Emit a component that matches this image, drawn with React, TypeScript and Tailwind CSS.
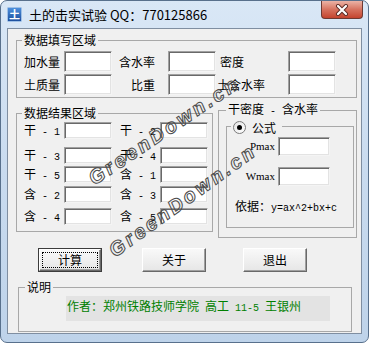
const cjk = "font-['Noto_Sans_CJK_SC',sans-serif]";
const mono = "font-['Liberation_Mono',monospace] text-[10px]";
const edit =
  "bg-white border border-t-[#a0a0a0] border-l-[#a0a0a0] border-r-[#f4f4f4] border-b-[#f4f4f4] shadow-[inset_1px_1px_0_#696969,inset_-1px_-1px_0_#e3e3e3]";

function Group({
  title,
  className,
  legendClass,
  children,
}: {
  title: React.ReactNode;
  className: string;
  legendClass: string;
  children?: React.ReactNode;
}) {
  return (
    <fieldset className={`border border-[#a8a8a8] ${className}`}>
      <legend className={`px-[2px] leading-[16px] ${legendClass}`}>{title}</legend>
      {children}
    </fieldset>
  );
}

function Label2({ ch, n }: { ch: string; n: string }) {
  return (
    <span className="whitespace-pre leading-[16px]">
      {ch}
      <span className={mono}>{` - ${n}`}</span>
    </span>
  );
}

function Btn({ label, isDefault, className }: { label: string; isDefault?: boolean; className: string }) {
  return (
    <div className={`h-[24px] w-[64px] ${isDefault ? "border border-[#3c3c3c]" : ""} ${className}`}>
      <div className="flex h-full w-full items-center justify-center border border-t-white border-l-white border-r-[#696969] border-b-[#696969] bg-gradient-to-b from-[#f9f9f9] to-[#e6e6e6] shadow-[inset_-1px_-1px_0_#a0a0a0]">
        {isDefault ? (
          <div className="flex h-[16px] w-[56px] items-center justify-center border border-dotted border-black leading-[14px]">
            {label}
          </div>
        ) : (
          <span className="leading-[16px]">{label}</span>
        )}
      </div>
    </div>
  );
}

const resultRows = [
  { mt: "mt-[1px]", a: ["干", "1"], b: ["干", "2"] },
  { mt: "mt-[8px]", a: ["干", "3"], b: ["干", "4"] },
  { mt: "mt-[2px]", a: ["干", "5"], b: ["含", "1"] },
  { mt: "mt-[3px]", a: ["含", "2"], b: ["含", "3"] },
  { mt: "mt-[5px]", a: ["含", "4"], b: ["含", "5"] },
];

export default function App() {
  return (
    <div className={`relative h-[343px] w-[369px] overflow-hidden bg-white text-[12px] text-black ${cjk}`}>
      <div className="h-full w-full rounded-[7px] border border-[#58708c] bg-gradient-to-b from-[#d9e7f6] via-[#c9dbef] to-[#bed3ea]">
        {/* title bar */}
        <div className="flex h-[27px] items-start">
          <div className="ml-[6px] mt-[6px] flex h-[15px] w-[15px] items-start justify-center rounded-[1px] border border-[#9fc0e6] bg-gradient-to-b from-[#4d8fdc] to-[#1d4f9e] text-[11px] font-bold leading-[12px] text-white">
            土
          </div>
          <div className="ml-[7px] mt-[5px] text-[13px] leading-[17px] text-black">土的击实试验 QQ：770125866</div>
          <div className="ml-auto mr-[5px] flex h-[18px] w-[42px] items-center justify-center rounded-b-[4px] border border-t-0 border-[#6e3a33] bg-gradient-to-b from-[#eab3a6] via-[#d6725f] to-[#c4432e]">
            <svg width="14" height="12" viewBox="0 0 14 12">
              <path d="M3 2 L11 10 M11 2 L3 10" stroke="#5a2a24" strokeWidth="4" strokeLinecap="round" />
              <path d="M3 2 L11 10 M11 2 L3 10" stroke="#ffffff" strokeWidth="2.2" strokeLinecap="round" />
            </svg>
          </div>
        </div>

        {/* client area */}
        <div className="mx-[6px] h-[306px] border border-[#7f8ea1] bg-[#f0f0f0]">
          {/* data entry */}
          <Group title="数据填写区域" className="ml-[8px] mt-[3px] h-[66px] w-[341px]" legendClass="ml-[5px]">
            <div className="grid grid-cols-[40px_48px_56px_48px_72px_48px] grid-rows-[21px_21px] items-center gap-y-[2px] pl-[7px] pt-[3px]">
              <span className="leading-[16px]">加水量</span>
              <div className={`h-[21px] ${edit}`} />
              <span className="pr-[13px] text-right leading-[16px]">含水率</span>
              <div className={`h-[21px] ${edit}`} />
              <span className="pl-[4px] leading-[16px]">密度</span>
              <div className={`h-[21px] ${edit}`} />
              <span className="leading-[16px]">土质量</span>
              <div className={`h-[21px] ${edit}`} />
              <span className="pr-[13px] text-right leading-[16px]">比重</span>
              <div className={`h-[21px] ${edit}`} />
              <span className="pl-[1px] leading-[16px]">土含水率</span>
              <div className={`h-[21px] ${edit}`} />
            </div>
          </Group>

          <div className="ml-[8px] flex items-start">
            {/* results */}
            <Group title="数据结果区域" className="mt-[7px] h-[127px] w-[197px]" legendClass="ml-[5px]">
              <div className="flex flex-col">
                {resultRows.map((r, i) => (
                  <div key={i} className={`flex h-[17px] items-center ${r.mt}`}>
                    <div className="w-[47px] pr-[4px] text-right">
                      <Label2 ch={r.a[0]} n={r.a[1]} />
                    </div>
                    <div className={`h-[17px] w-[48px] ${edit}`} />
                    <div className="w-[48px] pr-[4px] text-right">
                      <Label2 ch={r.b[0]} n={r.b[1]} />
                    </div>
                    <div className={`h-[17px] w-[48px] ${edit}`} />
                  </div>
                ))}
              </div>
            </Group>

            {/* density - moisture */}
            <Group
              title={
                <span className="whitespace-pre">
                  干密度<span className={mono}>{" - "}</span>含水率
                </span>
              }
              className="ml-[5px] mt-[3px] h-[137px] w-[139px]"
              legendClass="ml-[7px]"
            >
              <fieldset className="ml-[7px] -mt-[3px] h-[111px] w-[128px] border border-[#a8a8a8]">
                <legend className="ml-[4px] pl-[2px] pr-[6px] leading-[16px]">
                  <span className="inline-flex h-[16px] items-center gap-[6px]">
                    <span className="flex h-[13px] w-[13px] items-center justify-center rounded-full border border-[#7b7b7b] bg-gradient-to-br from-[#e4e4e4] to-white">
                      <span className="h-[5px] w-[5px] rounded-full bg-black" />
                    </span>
                    <span>公式</span>
                  </span>
                </legend>
                <div className="grid grid-cols-[51px_52px] items-center">
                  <span className="mt-[1px] pr-[3px] text-right font-['Liberation_Serif',serif] text-[11px] leading-[19px]">
                    Pmax
                  </span>
                  <div className={`mt-[1px] h-[19px] ${edit}`} />
                  <span className="mt-[11px] pr-[3px] text-right font-['Liberation_Serif',serif] text-[11px] leading-[19px]">
                    Wmax
                  </span>
                  <div className={`mt-[11px] h-[19px] ${edit}`} />
                </div>
                <div className="mt-[12px] whitespace-pre pl-[8px] leading-[16px]">
                  依据：<span className={mono}>y=ax^2+bx+c</span>
                </div>
              </fieldset>
            </Group>
          </div>

          {/* buttons */}
          <div className="mt-[10px] flex">
            <Btn label="计算" isDefault className="ml-[30px]" />
            <Btn label="关于" className="ml-[40px]" />
            <Btn label="退出" className="ml-[37px]" />
          </div>

          {/* notes */}
          <Group title="说明" className="ml-[10px] mt-[7px] h-[53px] w-[334px]" legendClass="ml-[6px]">
            <div className="ml-[47px] mt-[1px] h-[25px] w-[264px] whitespace-pre bg-[#e3e3e3] pl-[1px] pt-[2px] leading-[16px] text-[#008000]">
              作者：郑州铁路技师学院<span className={mono}> </span>高工<span className={mono}> 11-5 </span>王银州
            </div>
          </Group>
        </div>
      </div>

      {/* watermark */}
      <span className="pointer-events-none absolute left-[97px] top-[166px] origin-bottom-left -rotate-[34deg] font-['Liberation_Sans',sans-serif] text-[20px] font-bold italic leading-[24px] tracking-[3px] text-transparent [-webkit-text-stroke:1px_#4a4a4a]">
        GreenDown.cn
      </span>
      <span className="pointer-events-none absolute left-[118px] top-[238px] origin-bottom-left -rotate-[36deg] font-['Liberation_Sans',sans-serif] text-[20px] font-bold italic leading-[24px] tracking-[3px] text-transparent [-webkit-text-stroke:1px_#4a4a4a]">
        GreenDown.cn
      </span>
    </div>
  );
}
